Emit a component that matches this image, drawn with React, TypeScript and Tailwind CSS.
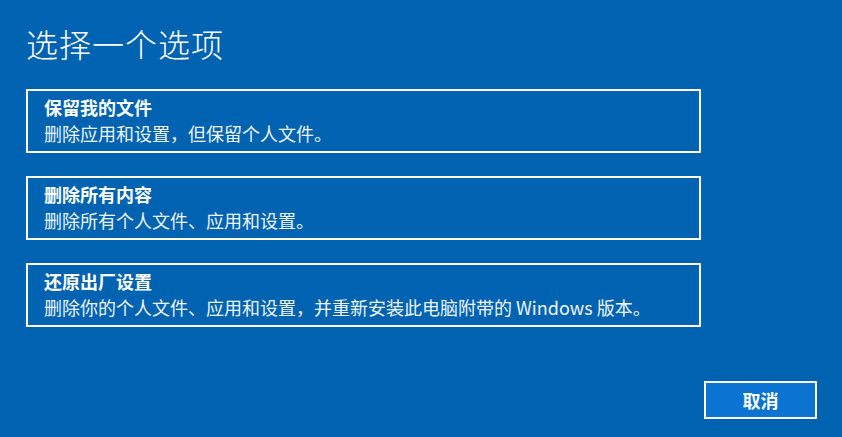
const options = [
  { title: '保留我的文件', desc: '删除应用和设置，但保留个人文件。' },
  { title: '删除所有内容', desc: '删除所有个人文件、应用和设置。' },
  { title: '还原出厂设置', desc: '删除你的个人文件、应用和设置，并重新安装此电脑附带的 Windows 版本。' },
];

export default function App() {
  return (
    <div
      className="w-[842px] h-[437px] bg-[#0063b1] text-white flex flex-col px-[26px] pt-[23px] overflow-hidden"
      style={{ fontFamily: '"Segoe UI", "Noto Sans CJK SC", "Noto Sans", sans-serif' }}
    >
      {/* 标题 */}
      <h1 className="text-[32px] leading-[40px] font-light tracking-[1px]">选择一个选项</h1>

      {/* 选项列表 */}
      <div className="mt-[26px] flex flex-col gap-[23px] w-[675px]">
        {options.map(opt => (
          <div key={opt.title} className="h-16 border-2 border-white px-4 pt-[3px]">
            <div className="text-[18px] leading-[26px] font-bold">{opt.title}</div>
            <div className="text-[18px] leading-[26px] text-[#eef4fb]">{opt.desc}</div>
          </div>
        ))}
      </div>

      {/* 取消按钮 */}
      <div className="mt-[54px] flex justify-end pr-[-1px]">
        <button className="w-[113px] h-[38px] mr-[-1px] border-2 border-white bg-[#0b74d2] text-[18px] font-bold text-white">
          取消
        </button>
      </div>
    </div>
  );
}
